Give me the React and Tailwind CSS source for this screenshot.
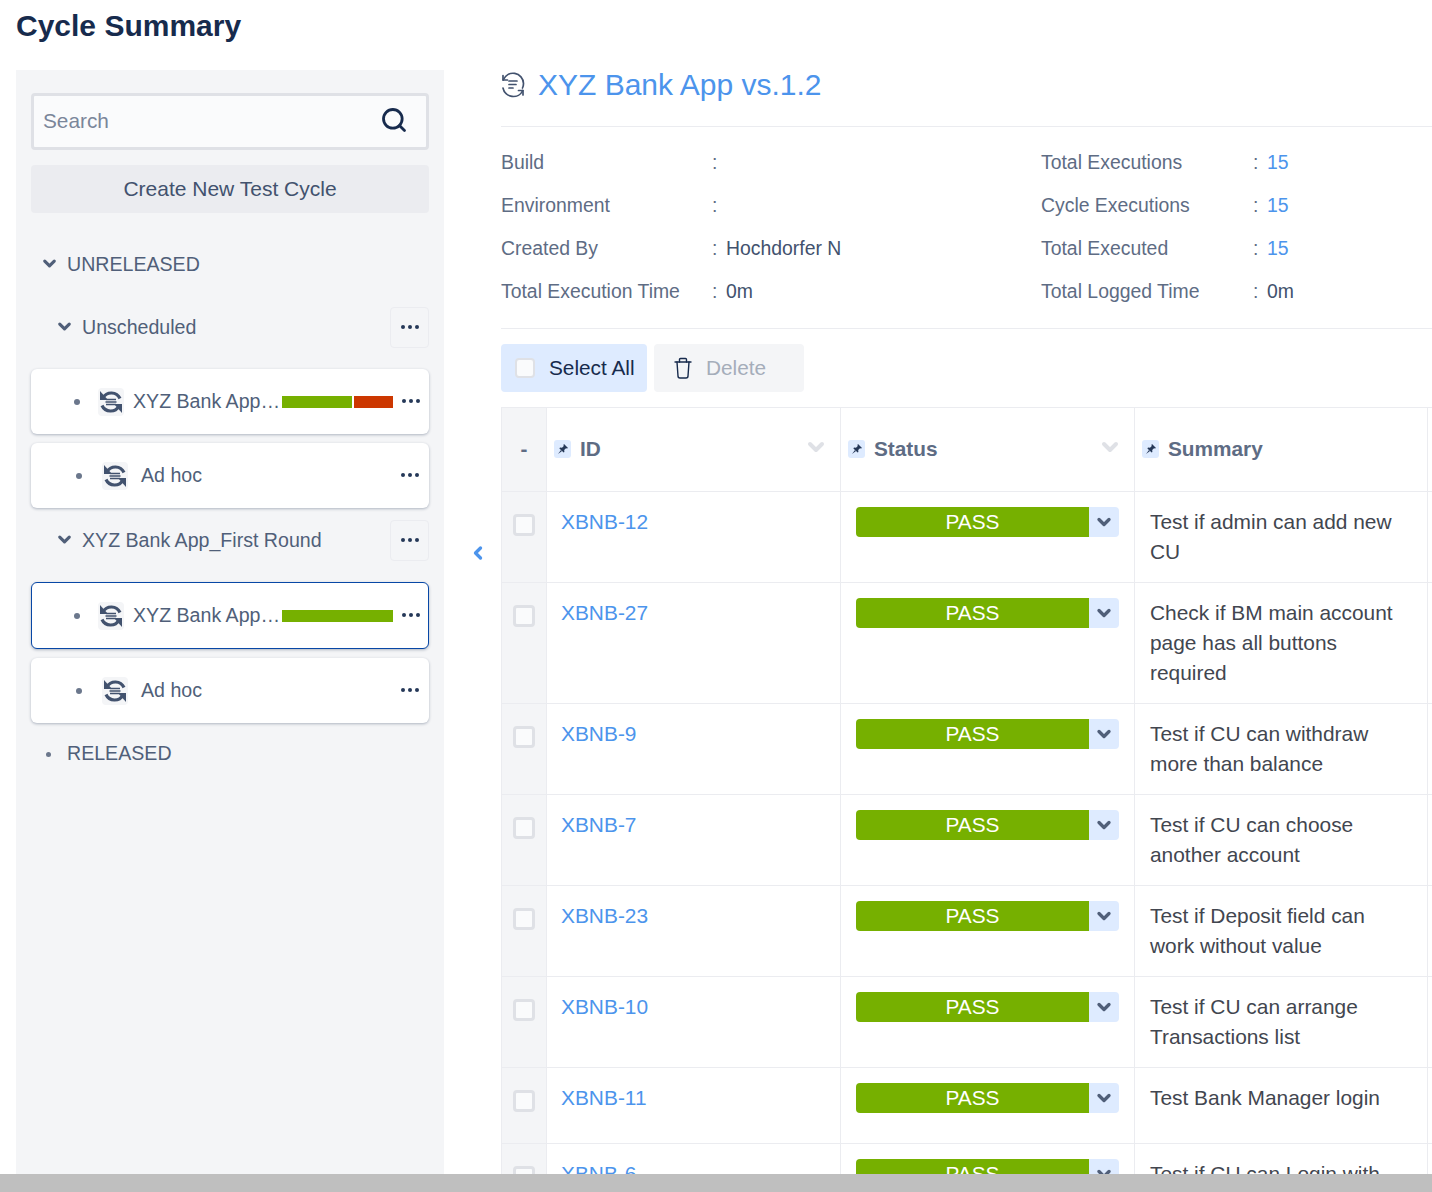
import React from "react";
import { ChevronDown, ChevronLeft, Search } from "lucide-react";

function CycleIcon({ thin }) {
  if (thin) {
    return (
      <svg viewBox="1 0 26 26" className="w-[26px] h-[26px] shrink-0" fill="none" stroke="#42526e" strokeWidth="1.7" strokeLinecap="round" strokeLinejoin="round">
        <path d="M3 3.5 V8 H7.5" />
        <path d="M3.2 8 A10.5 10.5 0 0 1 23.5 11.5 A10.5 10.5 0 0 1 22.5 16" />
        <path d="M23 23 V18.5 H18.5" />
        <path d="M22.8 18.5 A10.5 10.5 0 0 1 3 16" />
        <path d="M9 9 H17 M9 12.5 H16 M9 16 H13" />
      </svg>
    );
  }
  return (
    <span className="w-[26px] h-[28px] rounded-sm bg-[#f4f5f7] flex items-center justify-center shrink-0">
      <svg viewBox="0 0 26 26" className="w-[26px] h-[26px]" fill="none" stroke="#42526e" strokeWidth="3.2">
        <path d="M2 2 V11 H10 Z" fill="#42526e" stroke="none" />
        <path d="M5 9 A9.5 9.5 0 0 1 22 9.5" />
        <path d="M24 24 V15 H16 Z" fill="#42526e" stroke="none" />
        <path d="M21 17 A9.5 9.5 0 0 1 4 16.5" />
        <path d="M8 10.5 H18 M7.5 13 H18.5 M8 15.5 H18" strokeWidth="1.6" />
      </svg>
    </span>
  );
}

function Dots() {
  return (
    <svg viewBox="0 0 20 6" className="w-[20px] h-[6px] shrink-0 block" fill="#253858">
      <circle cx="3" cy="3" r="2" />
      <circle cx="10" cy="3" r="2" />
      <circle cx="17" cy="3" r="2" />
    </svg>
  );
}

function TreeRow({ label, indent, more }) {
  return (
    <div className={`flex items-center justify-between ${more ? "h-[41px]" : "h-[40px]"} ${indent}`}>
      <div className="flex items-center gap-[8px] text-[19.6px] text-[#505f79]">
        <ChevronDown size={19} strokeWidth={4} className="text-[#505f79] mb-[2px]" />
        <span>{label}</span>
      </div>
      {more && (
        <div className="w-[39px] h-[41px] border border-[#ebecf0] rounded-[4px] flex items-center justify-center pb-[2px]">
          <Dots />
        </div>
      )}
    </div>
  );
}

function Card({ label, bars, selected, adhoc, className }) {
  const dots = adhoc ? "mr-[9px]" : selected ? "mr-[7px]" : "mr-[8px]";
  return (
    <div className={`${className} ${selected ? "h-[67px] border border-[#0747a6]" : "h-[65px]"} bg-white rounded-[6px] shadow-[0_1px_3px_rgba(9,30,66,0.3)] flex items-center text-[19.6px] text-[#505f79]`}>
      <span className={`w-[6px] h-[6px] rounded-full bg-[#6b778c] shrink-0 ${adhoc ? "ml-[45px] mr-[20px]" : selected ? "ml-[42px] mr-[18px]" : "ml-[43px] mr-[18px]"}`} />
      <CycleIcon />
      {adhoc ? (
        <span className="ml-[13px]">{label}</span>
      ) : (
        <>
          <span className="ml-[9px] w-[149px] shrink-0 truncate">{label}</span>
          <div className="flex gap-[2px] w-[111px] h-[12px] shrink-0">
            {bars.map((b, i) => (
              <div key={i} className={b.color} style={{ width: b.w }} />
            ))}
          </div>
        </>
      )}
      <span className={`ml-auto mb-[2px] ${dots}`}><Dots /></span>
    </div>
  );
}

function Info({ label, value, link, labelW }) {
  return (
    <div className="flex h-[43px] items-center text-[19.4px] text-[#5e6c84]">
      <span className={labelW}>{label}</span>
      <span className="w-[14px]">:</span>
      {value && <span className={link ? "text-[#4c94ec]" : "text-[#42526e]"}>{value}</span>}
    </div>
  );
}

function Pin() {
  return (
    <span className="w-[17px] h-[18px] rounded-[3px] bg-[#deebff] flex items-center justify-center shrink-0">
      <svg viewBox="0 0 12 12" className="w-[12px] h-[12px]" fill="#253858">
        <path d="M7 1 L11 5 L10 5.6 L9 5.2 L7.2 7 L7.4 9 L6.6 9.6 L2.4 5.4 L3 4.6 L5 4.8 L6.8 3 L6.4 2 Z" />
        <path d="M4 7 L1 11 L5 8 Z" />
      </svg>
    </span>
  );
}

function HeadCell({ label, chevron, className }) {
  return (
    <div className={`${className} border-r border-[#ebecf0] flex items-center pb-[2px]`}>
      <Pin />
      <span className="ml-[9px] text-[20.8px] font-bold text-[#5e6c84]">{label}</span>
      {chevron && <ChevronDown size={24} strokeWidth={4} className="ml-auto mr-[12px] mb-[4px] text-[#dfe1e6]" />}
    </div>
  );
}

const rows = [
  { id: "XBNB-12", s: "Test if admin can add new CU", h: "h-[91px]" },
  { id: "XBNB-27", s: "Check if BM main account page has all buttons required", h: "h-[121px]" },
  { id: "XBNB-9", s: "Test if CU can withdraw more than balance", h: "h-[91px]" },
  { id: "XBNB-7", s: "Test if CU can choose another account", h: "h-[91px]" },
  { id: "XBNB-23", s: "Test if Deposit field can work without value", h: "h-[91px]" },
  { id: "XBNB-10", s: "Test if CU can arrange Transactions list", h: "h-[91px]" },
  { id: "XBNB-11", s: "Test Bank Manager login", h: "h-[76px]" },
  { id: "XBNB-6", s: "Test if CU can Login with correct details", h: "h-[91px]" },
];

const gridCols = "grid grid-cols-[45px_294px_294px_293px_1fr]";

export default function App() {
  return (
    <div className="h-[1192px] w-[1432px] overflow-hidden bg-white font-['Liberation_Sans',Arial,sans-serif]">
      <div className="h-[1174px] overflow-hidden">
        <h1 className="h-[70px] pl-[16px] pt-[9px] text-[30px] leading-[34px] font-bold text-[#172b4d]">Cycle Summary</h1>
        <div className="flex h-[1104px]">
          {/* Sidebar */}
          <aside className="ml-[16px] w-[428px] shrink-0 bg-[#f4f5f7] px-[15px] pt-[23px]">
            <div className="h-[57px] border-[3px] border-[#dfe1e6] rounded-[4px] bg-[#fafbfc] flex items-center justify-between pl-[9px] pr-[18px]">
              <span className="text-[20.8px] text-[#7a869a] pb-[2px]">Search</span>
              <Search size={28} strokeWidth={2.4} className="text-[#172b4d] mb-[3px]" />
            </div>
            <div className="mt-[15px] h-[48px] rounded-[4px] bg-[#ebecf0] flex items-center justify-center text-[21px] text-[#42526e]">Create New Test Cycle</div>
            <TreeRow label="UNRELEASED" indent="mt-[32px] pl-[9px]" />
            <TreeRow label="Unscheduled" indent="mt-[22px] pl-[24px]" more />
            <Card className="mt-[21px]" label="XYZ Bank App_Second Round" bars={[{ w: 70, color: "bg-[#76b000]" }, { w: 39, color: "bg-[#cc3700]" }]} />
            <Card className="mt-[9px]" label="Ad hoc" adhoc />
            <TreeRow label="XYZ Bank App_First Round" indent="mt-[12px] pl-[24px]" more />
            <Card className="mt-[21px]" selected label="XYZ Bank App_First Round" bars={[{ w: 111, color: "bg-[#76b000]" }]} />
            <Card className="mt-[9px]" label="Ad hoc" adhoc />
            <div className="mt-[11px] h-[40px] flex items-center text-[19.6px] text-[#505f79]">
              <span className="ml-[15px] mr-[16px] w-[5px] h-[5px] rounded-full bg-[#6b778c]" />
              RELEASED
            </div>
          </aside>

          {/* Collapse handle */}
          <div className="w-[57px] shrink-0 pt-[473px] pl-[24px]">
            <ChevronLeft size={20} strokeWidth={4} className="text-[#4c94ec]" />
          </div>

          {/* Main */}
          <main className="flex-1 min-w-0 overflow-hidden">
            <div className="h-[30px] flex items-center">
              <CycleIcon thin />
              <span className="ml-[11px] text-[30px] leading-[38px] text-[#4c94ec]">XYZ Bank App vs.1.2</span>
            </div>
            <div className="mt-[26px] border-t border-[#ebecf0]" />
            <div className="mt-[14px] flex">
              <div className="w-[540px] shrink-0">
                <Info label="Build" labelW="w-[211px]" />
                <Info label="Environment" labelW="w-[211px]" />
                <Info label="Created By" labelW="w-[211px]" value="Hochdorfer N" />
                <Info label="Total Execution Time" labelW="w-[211px]" value="0m" />
              </div>
              <div>
                <Info label="Total Executions" labelW="w-[212px]" value="15" link />
                <Info label="Cycle Executions" labelW="w-[212px]" value="15" link />
                <Info label="Total Executed" labelW="w-[212px]" value="15" link />
                <Info label="Total Logged Time" labelW="w-[212px]" value="0m" />
              </div>
            </div>
            <div className="mt-[15px] border-t border-[#ebecf0]" />
            <div className="mt-[15px] flex gap-[7px] h-[48px]">
              <div className="w-[146px] rounded-[4px] bg-[#deebff] flex items-center pl-[14px] text-[20.8px] text-[#172b4d]">
                <span className="w-[20px] h-[20px] rounded-[4px] border-[2px] border-[#dfe1e6] bg-[#fafbfc] mr-[14px]" />
                Select All
              </div>
              <div className="w-[150px] rounded-[4px] bg-[#f4f5f7] flex items-center pl-[17px] text-[20.8px] text-[#a5adba]">
                <svg viewBox="0 0 24 24" className="w-[24px] h-[24px] mr-[11px]" fill="none" stroke="#172b4d" strokeWidth="1.4" strokeLinecap="round" strokeLinejoin="round">
                  <path d="M4 6 H20" />
                  <path d="M8.5 6 V3.5 A1 1 0 0 1 9.5 2.5 H14.5 A1 1 0 0 1 15.5 3.5 V6" />
                  <path d="M6 6 L7 20 A2 2 0 0 0 9 22 H15 A2 2 0 0 0 17 20 L18 6" />
                </svg>
                Delete
              </div>
            </div>

            {/* Table */}
            <div className="mt-[15px] border-t border-l border-[#ebecf0] w-[931px]">
              <div className={`${gridCols} h-[84px] border-b border-[#ebecf0]`}>
                <div className="bg-[#f4f5f7] border-r border-[#ebecf0] flex items-center justify-center text-[20.8px] font-bold text-[#5e6c84] pb-[2px]">-</div>
                <HeadCell label="ID" chevron className="pl-[7px]" />
                <HeadCell label="Status" chevron className="pl-[7px]" />
                <HeadCell label="Summary" className="pl-[7px]" />
                <div />
              </div>
              {rows.map((r) => (
                <div key={r.id} className={`${gridCols} ${r.h} border-b border-[#ebecf0]`}>
                  <div className="bg-[#f4f5f7] border-r border-[#ebecf0] pt-[22px] pl-[11px]">
                    <div className="w-[22px] h-[22px] rounded-[4px] border-[3px] border-[#dfe1e6] bg-[#fafbfc]" />
                  </div>
                  <div className="border-r border-[#ebecf0] pt-[15px] pl-[14px] text-[20.9px] leading-[30px] text-[#4c94ec]">{r.id}</div>
                  <div className="border-r border-[#ebecf0] pt-[15px] pl-[15px]">
                    <div className="flex w-[263px] h-[30px]">
                      <div className="w-[233px] bg-[#76b000] rounded-l-[4px] flex items-center justify-center text-[20.8px] text-white">PASS</div>
                      <div className="w-[30px] bg-[#deebff] rounded-r-[4px] flex items-center justify-center">
                        <ChevronDown size={20} strokeWidth={4} className="text-[#505f79]" />
                      </div>
                    </div>
                  </div>
                  <div className="border-r border-[#ebecf0] pt-[15px] px-[15px] text-[20.9px] leading-[30px] text-[#42464f]">{r.s}</div>
                  <div />
                </div>
              ))}
            </div>
          </main>
        </div>
      </div>
      <div className="h-[18px] bg-[#bfbfbf]" />
    </div>
  );
}
